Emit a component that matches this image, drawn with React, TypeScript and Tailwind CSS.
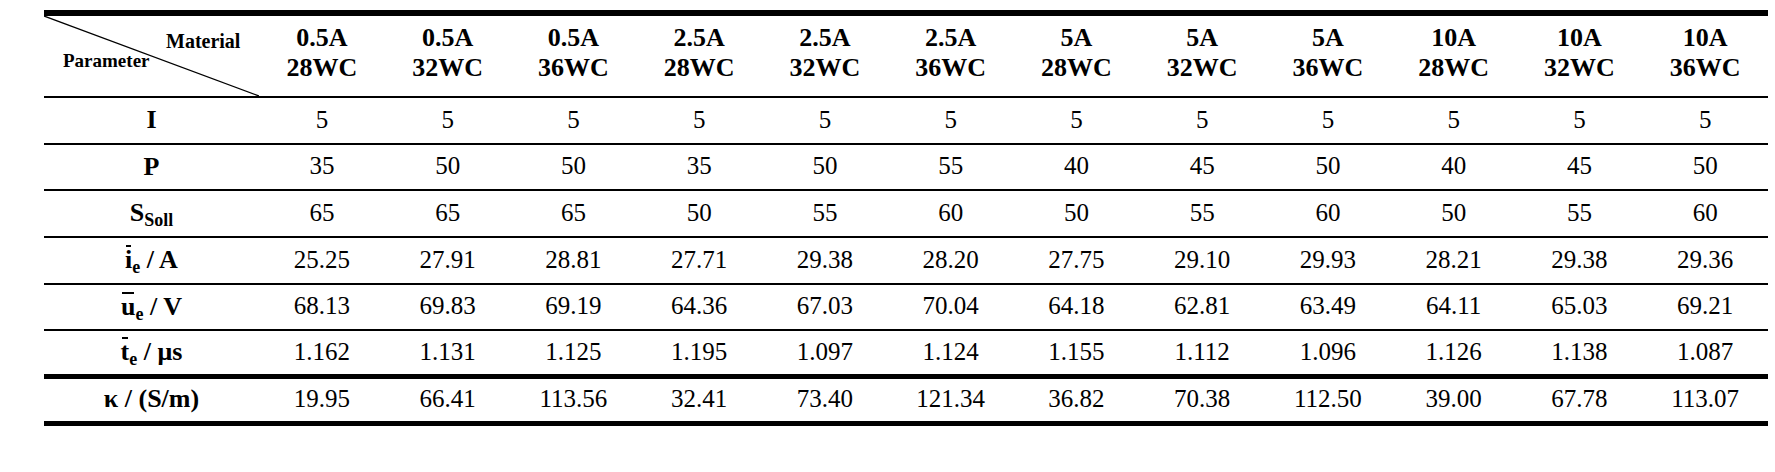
import React from "react";

const columns = [
  ["0.5A", "28WC"],
  ["0.5A", "32WC"],
  ["0.5A", "36WC"],
  ["2.5A", "28WC"],
  ["2.5A", "32WC"],
  ["2.5A", "36WC"],
  ["5A", "28WC"],
  ["5A", "32WC"],
  ["5A", "36WC"],
  ["10A", "28WC"],
  ["10A", "32WC"],
  ["10A", "36WC"],
];

const Sub = ({ children }: { children: React.ReactNode }) => (
  <span className="relative top-[5px] text-[18px]">{children}</span>
);

// letter with a bar on top (mean value)
const Bar = ({ children }: { children: React.ReactNode }) => (
  <span className="relative inline-block">
    {children}
    <span className="absolute left-[1px] right-[1px] top-[5px] h-[2px] bg-black" />
  </span>
);

interface Row {
  label: React.ReactNode;
  values: string[];
  height: string;
  border: string;
}

const rows: Row[] = [
  {
    label: "I",
    values: ["5", "5", "5", "5", "5", "5", "5", "5", "5", "5", "5", "5"],
    height: "h-[46.7px]",
    border: "border-b-2",
  },
  {
    label: "P",
    values: ["35", "50", "50", "35", "50", "55", "40", "45", "50", "40", "45", "50"],
    height: "h-[46.7px]",
    border: "border-b-2",
  },
  {
    label: (
      <>
        S<Sub>Soll</Sub>
      </>
    ),
    values: ["65", "65", "65", "50", "55", "60", "50", "55", "60", "50", "55", "60"],
    height: "h-[46.7px]",
    border: "border-b-2",
  },
  {
    label: (
      <>
        <Bar>i</Bar>
        <Sub>e</Sub> / A
      </>
    ),
    values: ["25.25", "27.91", "28.81", "27.71", "29.38", "28.20", "27.75", "29.10", "29.93", "28.21", "29.38", "29.36"],
    height: "h-[46.7px]",
    border: "border-b-2",
  },
  {
    label: (
      <>
        <Bar>u</Bar>
        <Sub>e</Sub> / V
      </>
    ),
    values: ["68.13", "69.83", "69.19", "64.36", "67.03", "70.04", "64.18", "62.81", "63.49", "64.11", "65.03", "69.21"],
    height: "h-[46.7px]",
    border: "border-b-2",
  },
  {
    label: (
      <>
        <Bar>t</Bar>
        <Sub>e</Sub> / μs
      </>
    ),
    values: ["1.162", "1.131", "1.125", "1.195", "1.097", "1.124", "1.155", "1.112", "1.096", "1.126", "1.138", "1.087"],
    height: "h-[47.5px]",
    border: "border-b-[5px]",
  },
  {
    label: "κ / (S/m)",
    values: ["19.95", "66.41", "113.56", "32.41", "73.40", "121.34", "36.82", "70.38", "112.50", "39.00", "67.78", "113.07"],
    height: "h-[47px]",
    border: "border-b-[5px]",
  },
];

export default function App() {
  return (
    <div className="w-[1775px] h-[472px] bg-white pt-[10px] pl-[44px] font-[family-name:Liberation_Serif,serif] text-black">
      <div className="w-[1724px] border-t-[6px] border-black">
        {/* header */}
        <div className="grid grid-cols-[215px_repeat(12,1fr)] h-[82px] border-b-2 border-black">
          <div className="relative">
            <svg
              className="absolute inset-0 w-full h-full"
              viewBox="0 0 100 100"
              preserveAspectRatio="none"
            >
              <line
                x1="0"
                y1="0"
                x2="100"
                y2="100"
                stroke="black"
                strokeWidth="1.3"
                vectorEffect="non-scaling-stroke"
              />
            </svg>
            <div className="relative flex flex-col pt-[15px] text-[20px] leading-[20px] font-bold">
              <span className="pl-[122px]">Material</span>
              <span className="pl-[19px] text-[19px]">Parameter</span>
            </div>
          </div>
          {columns.map(([a, b], i) => (
            <div
              key={i}
              className="flex flex-col items-center justify-center pb-[6px] text-[26px] leading-[30px] font-bold"
            >
              <span>{a}</span>
              <span>{b}</span>
            </div>
          ))}
        </div>

        {/* body */}
        {rows.map((row, r) => (
          <div
            key={r}
            className={`grid grid-cols-[215px_repeat(12,1fr)] border-black ${row.height} ${row.border}`}
          >
            <div className="flex items-center justify-center pb-[2px] text-[26px] font-bold">
              <span>{row.label}</span>
            </div>
            {row.values.map((v, i) => (
              <div key={i} className="flex items-center justify-center pb-[2px] text-[25px]">
                {v}
              </div>
            ))}
          </div>
        ))}
      </div>
    </div>
  );
}
